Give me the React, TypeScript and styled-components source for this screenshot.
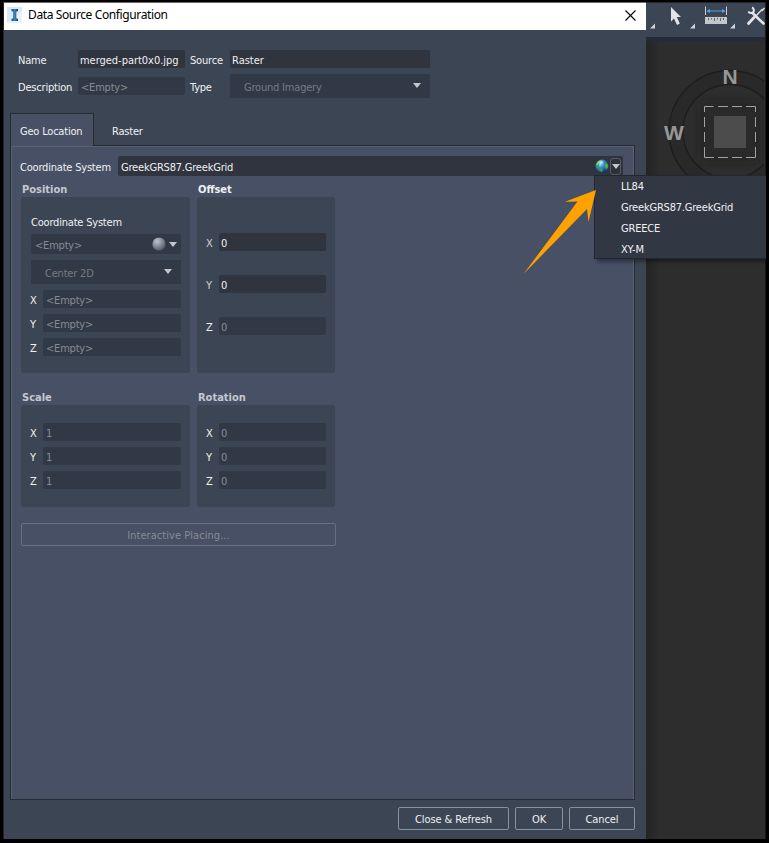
import React from "react";
import styled, { createGlobalStyle } from "styled-components";

const Global = createGlobalStyle`
  * { box-sizing: border-box; }
  body { margin: 0; background: #000; overflow: hidden; }
`;

const Screen = styled.div`
  position: relative;
  width: 769px;
  height: 843px;
  display: flex;
  padding: 2px 4px 4px 3px;
  background: #000;
  overflow: hidden;
  font: 11px/18px "DejaVu Sans Condensed", "DejaVu Sans", sans-serif;
  font-stretch: condensed;
  letter-spacing: -0.2px;
  color: #f0f1f3;
  white-space: nowrap;
`;

const Dialog = styled.section`
  width: 643px;
  height: 837px;
  flex: none;
  display: flex;
  flex-direction: column;
  background: #3c4553;
  border-left: 1px solid #20242b;
  border-top: 1px solid #6b6b6b;
`;

const TitleBar = styled.header`
  height: 27px;
  flex: none;
  display: flex;
  align-items: center;
  padding: 0 10px 3px 3px;
  background: #fff;
  color: #000;
  font: 12px/18px "Noto Sans", sans-serif;
  letter-spacing: -0.38px;
  svg { flex: none; }
`;

const Title = styled.span`
  flex: 1;
  margin-left: 6px;
`;

const Header = styled.div`
  display: grid;
  grid-template-columns: 60px 107px 45px 200px;
  grid-template-rows: 18px 24px;
  row-gap: 6px;
  align-items: center;
  padding: 20px 0 0 14px;
`;

const Label = styled.label<{ $indent?: number; $drop?: number }>`
  display: block;
  height: 18px;
  line-height: ${(p) => 22 + 2 * (p.$drop ?? 0)}px;
  padding-left: ${(p) => p.$indent ?? 0}px;
`;

const Field = styled.div<{ $off?: boolean; $tall?: boolean; $pad?: number; $track?: number }>`
  flex: 1;
  min-width: 0;
  height: ${(p) => (p.$tall ? 20 : 18)}px;
  line-height: ${(p) => (p.$tall ? 23 : 21)}px;
  letter-spacing: ${(p) => p.$track ?? -0.2}px;
  display: flex;
  padding-left: ${(p) => p.$pad ?? 3}px;
  border-radius: 2px;
  background: ${(p) => (p.$off ? "#323946" : "#2f343f")};
  color: ${(p) => (p.$off ? "#858b94" : "#f0f1f3")};
`;

const Select = styled.div<{ $right: number }>`
  height: 24px;
  display: flex;
  align-items: center;
  justify-content: space-between;
  padding: 3px ${(p) => p.$right}px 0 14px;
  background: #323946;
  color: #747b85;
  svg { margin-top: -4px; }
`;

const Tabs = styled.nav`
  display: flex;
  height: 33px;
  flex: none;
  margin: 15px 0 -1px 6px;
  position: relative;
`;

const Tab = styled.div<{ $active?: boolean }>`
  width: ${(p) => (p.$active ? 84 : 70)}px;
  line-height: 35px;
  padding-left: ${(p) => (p.$active ? 9 : 17)}px;
  border: 1px solid ${(p) => (p.$active ? "#262b36" : "transparent")};
  border-bottom: 0;
  background: ${(p) => (p.$active ? "#475064" : "transparent")};
`;

const Panel = styled.main`
  width: 625px;
  height: 655px;
  flex: none;
  margin-left: 6px;
  padding: 10px 0 0 9px;
  background: #475064;
  border: 1px solid #262b36;
  box-shadow: inset 1px 1px #596071, inset -1px 0 #596071;
`;

const CoordRow = styled.div`
  display: grid;
  grid-template-columns: 98px 505px;
`;

const FieldTools = styled.span<{ $right: number; $gap: number }>`
  display: flex;
  align-items: center;
  margin-left: auto;
  padding-right: ${(p) => p.$right}px;
  gap: ${(p) => p.$gap}px;
`;

const DropButton = styled.span`
  width: 11px;
  height: 17px;
  display: flex;
  align-items: center;
  justify-content: center;
  border: 1px solid #555a63;
  border-radius: 3px;
  background: #2b303a;
`;

const Groups = styled.div`
  display: grid;
  grid-template-columns: 169px 138px;
  column-gap: 7px;
  padding: 4px 0 0 1px;
`;

const GroupTitle = styled.h2<{ $bright?: boolean }>`
  margin: 0;
  height: 17px;
  padding-left: 1px;
  font-size: 11px;
  font-weight: bold;
  line-height: 20px;
  letter-spacing: 0;
  color: ${(p) => (p.$bright ? "#f0f1f3" : "#c4c8cf")};
`;

const Box = styled.div<{ $h: number; $top: number; $gap: number }>`
  height: ${(p) => p.$h}px;
  margin-bottom: 15px;
  padding: ${(p) => p.$top}px 9px 0;
  display: flex;
  flex-direction: column;
  gap: ${(p) => p.$gap}px;
  border-radius: 3px;
  background: #3c4553;
`;

const AxisRow = styled.div`
  display: flex;
  height: 18px;
  flex: none;
`;

const AxisName = styled.span<{ $dim?: boolean }>`
  width: 13px;
  flex: none;
  line-height: 21px;
  color: ${(p) => (p.$dim ? "#cfd2d7" : "#f0f1f3")};
`;

const Button = styled.button<{ $w: number; $off?: boolean }>`
  width: ${(p) => p.$w}px;
  height: 23px;
  padding: 0;
  font: inherit;
  font-stretch: condensed;
  letter-spacing: ${(p) => (p.$off ? 0.05 : -0.08)}px;
  line-height: 23px;
  background: transparent;
  border: 1px solid ${(p) => (p.$off ? "#687082" : "#8592a0")};
  border-radius: 2px;
  color: ${(p) => (p.$off ? "#858c9a" : "#f0f1f3")};
`;

const PlacingButton = styled(Button)`
  display: block;
  margin: 1px 0 0 1px;
`;

const Footer = styled.footer`
  display: flex;
  justify-content: flex-end;
  gap: 6px;
  padding: 7px 11px 0 0;
`;

const Viewport = styled.aside`
  flex: 1;
  display: flex;
  flex-direction: column;
  background: linear-gradient(90deg, #242424, #2d2d2d 14px);
  border-right: 1px solid #17191d;
`;

const Toolbar = styled.div`
  height: 39px;
  flex: none;
  background: #3c4553;
  border-top: 1px solid #23262c;
  border-bottom: 4px solid #222b3a;
  svg { display: block; }
`;

const Menu = styled.ul`
  position: absolute;
  left: 594px;
  top: 175px;
  width: 172px;
  height: 84px;
  margin: 0;
  padding: 0 0 0 26px;
  list-style: none;
  background: #323744;
  border: 1px solid #232830;
  border-right: 0;
  box-shadow: 3px 3px 3px rgba(0, 0, 0, 0.35);
`;

const MenuItem = styled.li`
  height: 21px;
  line-height: 22px;
`;

const Pointer = styled.svg`
  position: absolute;
  left: 520px;
  top: 186px;
`;

const Caret = ({ color = "#c3c7cd" }: { color?: string }) => (
  <svg width="8" height="5" viewBox="0 0 8 5">
    <path d="M0 0h8L4 5z" fill={color} />
  </svg>
);

const Globe = () => (
  <svg width="14" height="14" viewBox="0 0 14 14">
    <defs>
      <radialGradient id="sea" cx=".35" cy=".3" r=".75">
        <stop offset="0" stopColor="#b5e6ff" />
        <stop offset=".4" stopColor="#3f8fd6" />
        <stop offset="1" stopColor="#0a2f86" />
      </radialGradient>
    </defs>
    <circle cx="7" cy="7" r="6.5" fill="url(#sea)" />
    <path d="M.8 6Q1.500 2.500 5 1L5.500 3 4 5 3.500 7.500 2 8zM10 4.500l2-.5 1.300 2.500-.3 2.500-1.700 1.500-1.300-2zM4 9l3 .7 1 1.300-1.200 1.800L4.500 12z" fill="#39a83a" />
    <path d="M1.500 5.500Q2.500 3 4.500 2L4 4 2.700 6zM10.700 5.500l1.500 1-1 1z" fill="#9be05a" />
    <ellipse cx="5.800" cy="3.200" rx="2.600" ry="1.500" fill="#e2f6ff" opacity=".55" />
  </svg>
);

const Sphere = () => (
  <svg width="14" height="14" viewBox="0 0 14 14">
    <defs>
      <radialGradient id="ball" cx=".36" cy=".3" r=".7">
        <stop offset="0" stopColor="#bec5cf" />
        <stop offset=".55" stopColor="#858d9a" />
        <stop offset="1" stopColor="#535c6c" />
      </radialGradient>
    </defs>
    <circle cx="7" cy="7" r="6.600" fill="url(#ball)" />
  </svg>
);

const AppIcon = () => (
  <svg width="15" height="16" viewBox="0 0 15 16">
    <defs>
      <linearGradient id="beam" x1="0" x2="1">
        <stop offset="0" stopColor="#174a78" />
        <stop offset=".5" stopColor="#3f86ba" />
        <stop offset="1" stopColor="#123b63" />
      </linearGradient>
    </defs>
    <path d="M0 0h15v16H0z" fill="#d9e8f7" />
    <path d="M0 16L15 4v12z" fill="#e9f2fc" />
    <path d="M4.500 2h6.500v2L9.300 4.800v6.400l1.700.8v2H4.500v-2l1.700-.8V4.800L4.500 4z" fill="url(#beam)" />
  </svg>
);

const ToolIcons = () => (
  <svg width="119" height="34" viewBox="646 3 119 34">
    <g fill="#cfd2d6">
      <path d="M655 23.500v5h-5zM695 23.500v5h-5zM735 23.500v5h-5z" />
      <path d="M671 7l10 10h-4.200l3 6.500-2.800 1.500-3-6.500-3 3z" fill="#e2e4e7" />
      <path d="M705 17h22v7h-22z" fill="#c3c6ca" />
    </g>
    <path d="M708.500 18v2M711.500 18v1.500M714.500 18v3M717.500 18v1.500M720.500 18v3M723.500 18v2" stroke="#5f656e" fill="none" />
    <path d="M705.500 6.500v8.500M726.500 6.500v8.500" stroke="#cbd0d6" />
    <path d="M707 11h18" stroke="#4fa3df" />
    <path d="M706.500 11l3.500-2v4zM725.500 11l-3.500-2v4z" fill="#4fa3df" />
    <g stroke="#e2e4e7" fill="none">
      <path d="M752.500 13l11 10.500" strokeWidth="2.600" strokeLinecap="round" />
      <path d="M748.300 11.500a3.200 3.200 0 0 0 5.200.5 3.200 3.200 0 0 0-1.500-4.500" strokeWidth="2" />
      <path d="M762 9.500l-7.500 8" strokeWidth="1.300" />
      <path d="M754 17.500l-5.500 6" strokeWidth="2.800" strokeLinecap="round" />
    </g>
    <path d="M761 10l3-2.500 1 .7-2.500 3.300z" fill="#e2e4e7" />
  </svg>
);

const Compass = () => (
  <svg width="118" height="180" viewBox="646 41 118 180">
    <defs>
      <filter id="soft" x="-50%" y="-50%" width="200%" height="200%">
        <feGaussianBlur stdDeviation="5" />
      </filter>
    </defs>
    <circle cx="730" cy="131.500" r="54" fill="none" stroke="#292929" strokeWidth="14" />
    <circle cx="730" cy="131.500" r="61" fill="none" stroke="#1d1d1d" strokeWidth="1.300" />
    <circle cx="730" cy="131.500" r="47" fill="none" stroke="#1d1d1d" strokeWidth="1.300" />
    <path d="M702 104h56v56h-56z" fill="#1f1f1f" opacity=".6" filter="url(#soft)" />
    <path d="M704.500 106.500h51v51h-51z" fill="#2a2a2a" />
    <path
      d="M704.500 112v-5.500h9M718 106.500h10M732 106.500h10M746 106.500h9.500v5.500M755.500 117v10M755.500 132v10M755.500 147v10.500h-9.500M742 157.500h-10M728 157.500h-10M714 157.500h-9.500v-10.500M704.500 142v-10M704.500 127v-10"
      stroke="#a3a3a3" fill="none"
    />
    <path d="M714 116h32v32h-32z" fill="#4c4c4c" />
    <g fill="#979797" fontFamily="Liberation Sans, sans-serif" fontWeight="bold" fontSize="21" textAnchor="middle" letterSpacing="0">
      <text x="730" y="83.500">N</text>
      <text x="674" y="139.500">W</text>
    </g>
  </svg>
);

const AXES = ["X", "Y", "Z"];

type AxesProps = { values: string[]; enabled?: number; pad?: number; dimNames?: boolean };

const Axes = ({ values, enabled = 0, pad = 3, dimNames }: AxesProps) => (
  <>
    {AXES.map((axis, i) => (
      <AxisRow key={axis}>
        <AxisName $dim={dimNames && i < 2}>{axis}</AxisName>
        <Field $off={i >= enabled} $pad={pad}>{values[i]}</Field>
      </AxisRow>
    ))}
  </>
);

const PositionBox = styled(Box)`
  padding-left: 10px;
  ${Label} { margin-bottom: -3px; line-height: 20px; }
  ${Field} { flex: none; }
  ${AxisRow} { margin-left: -1px; }
  ${AxisRow} ${Field} { flex: 1; }
`;

export default function App() {
  return (
    <Screen>
      <Global />
      <Dialog>
        <TitleBar>
          <AppIcon />
          <Title>Data Source Configuration</Title>
          <svg width="11" height="11" viewBox="0 0 11 11">
            <path d="M.5.5l10 10M10.500.5l-10 10" stroke="#000" strokeWidth="1.100" />
          </svg>
        </TitleBar>
        <Header>
          <Label>Name</Label>
          <Field $pad={2} $track={-0.03}>merged-part0x0.jpg</Field>
          <Label $indent={5}>Source</Label>
          <Field $pad={2} $track={0}>Raster</Field>
          <Label>Description</Label>
          <Field $off>&lt;Empty&gt;</Field>
          <Label $indent={5}>Type</Label>
          <Select $right={9}>Ground Imagery<Caret /></Select>
        </Header>
        <Tabs>
          <Tab $active>Geo Location</Tab>
          <Tab>Raster</Tab>
        </Tabs>
        <Panel>
          <CoordRow>
            <Label $drop={0.5}>Coordinate System</Label>
            <Field $tall>
              GreekGRS87.GreekGrid
              <FieldTools $right={2} $gap={1}>
                <Globe />
                <DropButton><Caret /></DropButton>
              </FieldTools>
            </Field>
          </CoordRow>
          <Groups>
            <section>
              <GroupTitle>Position</GroupTitle>
              <PositionBox $h={176} $top={16} $gap={6}>
                <Label>Coordinate System</Label>
                <Field $off $tall $pad={4}>
                  &lt;Empty&gt;
                  <FieldTools $right={4} $gap={3}>
                    <Sphere />
                    <Caret />
                  </FieldTools>
                </Field>
                <Select $right={9}>Center 2D<Caret /></Select>
                <Axes values={["<Empty>", "<Empty>", "<Empty>"]} />
              </PositionBox>
            </section>
            <section>
              <GroupTitle $bright>Offset</GroupTitle>
              <Box $h={176} $top={36} $gap={24}>
                <Axes values={["0", "0", "0"]} enabled={2} pad={2} dimNames />
              </Box>
            </section>
            <section>
              <GroupTitle>Scale</GroupTitle>
              <Box $h={102} $top={18} $gap={6}>
                <Axes values={["1", "1", "1"]} />
              </Box>
            </section>
            <section>
              <GroupTitle>Rotation</GroupTitle>
              <Box $h={102} $top={18} $gap={6}>
                <Axes values={["0", "0", "0"]} pad={2} />
              </Box>
            </section>
          </Groups>
          <PlacingButton $w={315} $off>Interactive Placing...</PlacingButton>
        </Panel>
        <Footer>
          <Button $w={111}>Close &amp; Refresh</Button>
          <Button $w={48}>OK</Button>
          <Button $w={66}>Cancel</Button>
        </Footer>
      </Dialog>
      <Viewport>
        <Toolbar><ToolIcons /></Toolbar>
        <Compass />
      </Viewport>
      <Menu>
        <MenuItem>LL84</MenuItem>
        <MenuItem>GreekGRS87.GreekGrid</MenuItem>
        <MenuItem>GREECE</MenuItem>
        <MenuItem>XY-M</MenuItem>
      </Menu>
      <Pointer width="80" height="92" viewBox="520 186 80 92">
        <path d="M523.500 274L577.500 201.500 565 201.700 596 190 588.500 222 587 209z" fill="#ffa200" />
      </Pointer>
    </Screen>
  );
}
